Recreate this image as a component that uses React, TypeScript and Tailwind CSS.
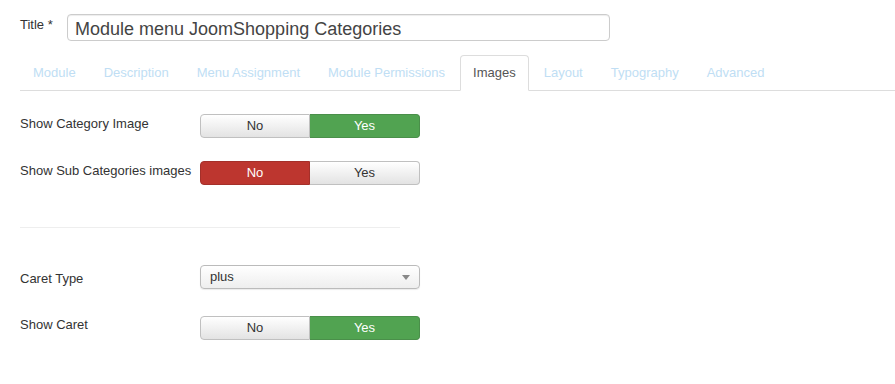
const tabs = [
  "Module",
  "Description",
  "Menu Assignment",
  "Module Permissions",
  "Images",
  "Layout",
  "Typography",
  "Advanced",
];

function Toggle({ value, danger }: { value: "yes" | "no"; danger?: boolean }) {
  const off =
    "bg-gradient-to-b from-[#ffffff] to-[#e3e3e3] text-[#333] border-[#c0c0c0]";
  const yesOn = "bg-[#51a351] text-white border-[#4a8f4a]";
  const noOn = "bg-[#bd362f] text-white border-[#a4302a]";
  return (
    <div className="flex h-[24px] w-[220px] text-[13px] leading-[18px]">
      <div
        className={`flex w-[110px] items-center justify-center rounded-l-[4px] border ${
          value === "no" && danger ? noOn : off
        }`}
      >
        No
      </div>
      <div
        className={`flex w-[110px] items-center justify-center rounded-r-[4px] border border-l-0 ${
          value === "yes" ? yesOn : off
        }`}
      >
        Yes
      </div>
    </div>
  );
}

export default function App() {
  return (
    <div
      className="h-[384px] w-[895px] bg-white pl-[20px] pt-[14px] text-[13px] leading-[18px] text-[#333]"
      style={{ fontFamily: '"Liberation Sans", Arial, sans-serif' }}
    >
      {/* title */}
      <div className="flex items-start">
        <label className="w-[47px] pt-[2px]">Title *</label>
        <div className="flex h-[27px] w-[543px] items-center rounded-[4px] border border-[#cccccc] px-[7px] pt-[2px] text-[18px] text-[#444] shadow-[inset_0_1px_1px_rgba(0,0,0,0.075)]">
          Module menu JoomShopping Categories
        </div>
      </div>

      {/* tabs */}
      <div className="mt-[14px] flex border-b border-[#dddddd]">
        {tabs.map((t) => (
          <div
            key={t}
            className={`mr-[2px] -mb-px rounded-t-[4px] border px-[12px] pt-[8px] pb-[8px] ${
              t === "Images"
                ? "border-[#dddddd] border-b-white bg-white text-[#555]"
                : "border-transparent text-[#c0def4]"
            }`}
          >
            {t}
          </div>
        ))}
      </div>

      {/* toggles */}
      <div className="mt-[23px] flex items-start">
        <div className="w-[180px] pt-[1px]">Show Category Image</div>
        <Toggle value="yes" />
      </div>
      <div className="mt-[23px] flex items-start">
        <div className="w-[180px] pt-[1px]">Show Sub Categories images</div>
        <Toggle value="no" danger />
      </div>

      <div className="mt-[42px] h-px w-[380px] bg-[#eeeeee]" />

      <div className="mt-[37px] flex items-start">
        <div className="w-[180px] pt-[5px]">Caret Type</div>
        <div className="flex h-[24px] w-[220px] items-center justify-between rounded-[4px] border border-[#bbbbbb] bg-gradient-to-b from-[#ffffff] to-[#eeeeee] pl-[9px] pr-[9px] shadow-[0_1px_1px_rgba(0,0,0,0.08)]">
          <span>plus</span>
          <svg width="8" height="5" viewBox="0 0 8 5">
            <path d="M0 0 L8 0 L4 5 Z" fill="#888" />
          </svg>
        </div>
      </div>

      <div className="mt-[27px] flex items-start">
        <div className="w-[180px]">Show Caret</div>
        <Toggle value="yes" />
      </div>
    </div>
  );
}
